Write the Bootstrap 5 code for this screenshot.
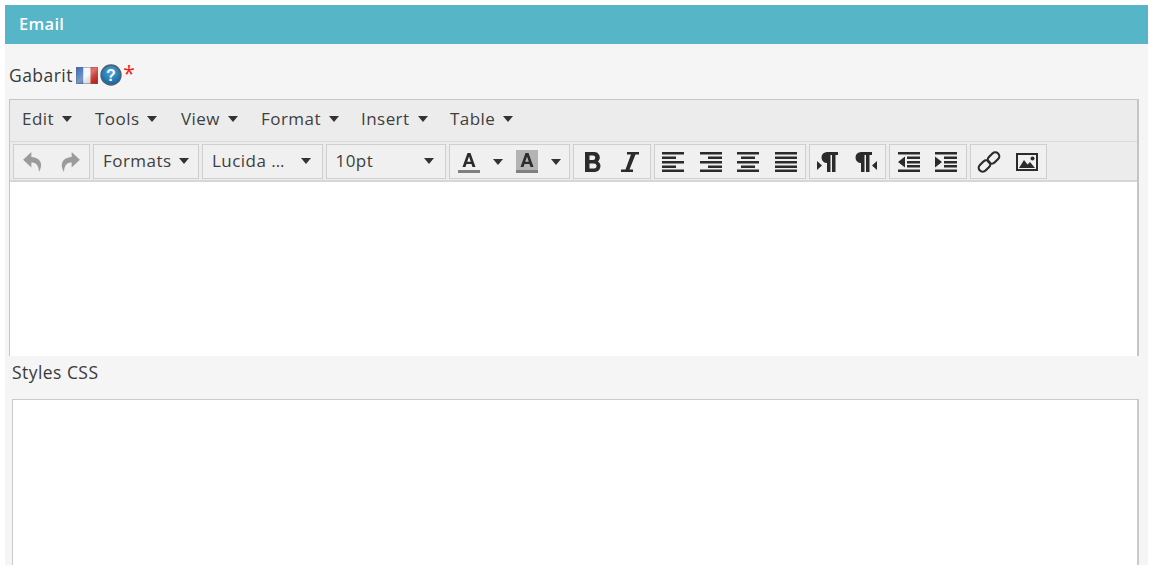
<!DOCTYPE html>
<html lang="fr">
<head>
<meta charset="utf-8">
<title>Email</title>
<link href="https://cdn.jsdelivr.net/npm/bootstrap@5.3.0/dist/css/bootstrap.min.css" rel="stylesheet">
<style>
html,body{height:565px;overflow:hidden}
body{background:#fff;font-family:"Open Sans","Noto Sans",sans-serif;color:#3a3a3a;font-size:17.5px;letter-spacing:.45px;padding:5px 6px 0 5px}
.sheet{background:#f5f5f5;height:560px;overflow:hidden}
.head-bar{background:#56b5c7;color:#fff;height:39px;padding:0 0 1px 14px;font-size:16.500px;font-weight:600;letter-spacing:.3px}
.gab-row{height:55px;padding:7px 0 0 4px;gap:3.500px}
.help-ic{margin-left:-1.500px}
.req{color:#f01c1c;font-size:21px;line-height:1;margin:-4px 0 0 -2.500px}
.editor{margin-left:4px;width:1130px;height:257px;border:1px solid #c5c5c5;border-right-width:2px;border-bottom:0;overflow:hidden;background:#fff}
.menu-row{height:42px;background:#ececec;border-bottom:1px solid #d9d9d9;padding:0 0 3px 12px}
.menu-it{font-size:17px;gap:8px;color:#3e3e3e}
.w-edit{width:73px}.w-tools{width:86px}.w-view{width:80px}.w-format{width:100px}.w-insert{width:89px}
.tool-row{height:40px;background:#ececec;border-bottom:2px solid #d6d6d6;padding:2px 0 0 3px;gap:3px}
.grp{height:35px;background:#f0f0f0;border:1px solid #cfcfcf;flex:none}
.grp svg{flex:none}
.icn{width:37.5px;height:100%}
.sel{padding:0 11px 2px 9px;font-size:17px;color:#3e3e3e}
.g-hist{width:77px}.g-fmt{width:106px;padding-right:9px}.g-font{width:120.500px}.g-size{width:120.500px}.g-color{width:121px;padding:0 8px}
.g-two{width:77.500px}.g-four{width:152px}
.caret-tri{width:0;height:0;border-left:5.500px solid transparent;border-right:5.500px solid transparent;border-top:6px solid #333;display:inline-block;flex:none}
.css-label{height:43px;padding:3px 0 0 7px;font-size:17.500px}
.css-box{margin-left:7px;width:1127px;height:200px;border-radius:0;border:1px solid #cacaca;border-right-width:2px;resize:none;display:block}
</style>
</head>
<body>
<div class="sheet">
  <div class="head-bar d-flex align-items-center">Email</div>
  <div class="gab-row d-flex align-items-center">
    <span>Gabarit</span>
    <svg width="22" height="17" viewBox="0 0 22 17"><defs><linearGradient id="shade" x1="0" y1="0" x2="1" y2="1"><stop offset="0" stop-color="#fff" stop-opacity=".05"/><stop offset=".5" stop-color="#fff" stop-opacity=".35"/><stop offset="1" stop-color="#000" stop-opacity=".1"/></linearGradient></defs><rect width="7.500" height="17" fill="#2d62b4"/><rect x="7.500" width="7" height="17" fill="#f4f4f8"/><rect x="14.500" width="7.500" height="17" fill="#d3241b"/><rect width="22" height="17" fill="url(#shade)"/><rect x=".5" y=".5" width="21" height="16" fill="none" stroke="#667" stroke-opacity=".45"/></svg>
    <svg class="help-ic" width="22" height="22" viewBox="0 0 22 22"><defs><radialGradient id="ball" cx=".5" cy=".35" r=".7"><stop offset="0" stop-color="#4ea6da"/><stop offset="1" stop-color="#0d5f9a"/></radialGradient></defs><circle cx="11" cy="11" r="10" fill="url(#ball)" stroke="#4f5f6b" stroke-width="1.400"/><text x="11" y="16.500" text-anchor="middle" font-family="Liberation Sans,sans-serif" font-weight="700" font-size="16" fill="#fff">?</text></svg>
    <span class="req">*</span>
  </div>
  <div class="editor">
    <div class="menu-row d-flex align-items-center">
      <div class="menu-it w-edit d-flex align-items-center"><span>Edit</span><i class="caret-tri"></i></div>
      <div class="menu-it w-tools d-flex align-items-center"><span>Tools</span><i class="caret-tri"></i></div>
      <div class="menu-it w-view d-flex align-items-center"><span>View</span><i class="caret-tri"></i></div>
      <div class="menu-it w-format d-flex align-items-center"><span>Format</span><i class="caret-tri"></i></div>
      <div class="menu-it w-insert d-flex align-items-center"><span>Insert</span><i class="caret-tri"></i></div>
      <div class="menu-it d-flex align-items-center"><span>Table</span><i class="caret-tri"></i></div>
    </div>
    <div class="tool-row d-flex">
      <div class="grp g-hist d-flex">
        <div class="icn d-flex align-items-center justify-content-center"><svg width="22" height="22" viewBox="0 0 20 20"><path fill="#9b9b9b" d="M8.500 1 1 8l7.500 7v-4.500c4 0 6.500 2 7 8.500 3-5 3.500-12.500-7-13.500z"/></svg></div>
        <div class="icn d-flex align-items-center justify-content-center"><svg width="22" height="22" viewBox="0 0 20 20"><path fill="#9b9b9b" d="M11.500 1 19 8l-7.500 7v-4.500c-4 0-6.500 2-7 8.500-3-5-3.500-12.500 7-13.500z"/></svg></div>
      </div>
      <div class="grp sel g-fmt d-flex align-items-center justify-content-between"><span>Formats</span><i class="caret-tri"></i></div>
      <div class="grp sel g-font d-flex align-items-center justify-content-between"><span>Lucida …</span><i class="caret-tri"></i></div>
      <div class="grp sel g-size d-flex align-items-center justify-content-between"><span>10pt</span><i class="caret-tri"></i></div>
      <div class="grp g-color d-flex align-items-center justify-content-between">
        <svg width="22" height="24" viewBox="0 0 22 24"><path fill="#2b2b2b" d="M4.500 17 9.500 3h3l5 14h-3l-1-3h-5l-1 3zm4.700-5.300h3.600L11 6.500z"/><rect y="20" width="22" height="3" fill="#808080"/></svg>
        <i class="caret-tri"></i>
        <svg width="22" height="24" viewBox="0 0 22 24"><rect width="22" height="23" fill="#b3b3b3"/><path fill="#2b2b2b" d="M4.500 17 9.500 3h3l5 14h-3l-1-3h-5l-1 3zm4.700-5.300h3.600L11 6.500z"/><rect y="20" width="22" height="3" fill="#808080"/></svg>
        <i class="caret-tri"></i>
      </div>
      <div class="grp g-two d-flex">
        <div class="icn d-flex align-items-center justify-content-center"><svg width="20" height="24" viewBox="0 0 20 24"><path fill="#2b2b2b" fill-rule="evenodd" d="M2 2h9a5.500 5.500 0 0 1 4 9.500A5.800 5.800 0 0 1 12 22H2zm4.500 3.500v4.500H10a2.250 2.250 0 0 0 0-4.500zm0 8v5H11a2.500 2.500 0 0 0 0-5z"/></svg></div>
        <div class="icn d-flex align-items-center justify-content-center"><svg width="20" height="24" viewBox="0 0 20 24"><path fill="#2b2b2b" d="M7 2h12v2.500h-3.500L9.500 19.500H13V22H1v-2.500h4.500L11 4.500H7z"/></svg></div>
      </div>
      <div class="grp g-four d-flex">
        <div class="icn d-flex align-items-center justify-content-center"><svg width="22" height="20" viewBox="0 0 22 20"><path fill="#2b2b2b" d="M0 0h22v2.500H0zM0 4.500h14v2.500H0zM0 9h22v2.500H0zM0 13.500h14V16H0zM0 17.500h22V20H0z"/></svg></div>
        <div class="icn d-flex align-items-center justify-content-center"><svg width="22" height="20" viewBox="0 0 22 20"><path fill="#2b2b2b" d="M0 0h22v2.500H0zM8 4.500h14v2.500H8zM0 9h22v2.500H0zM8 13.500h14V16H8zM0 17.500h22V20H0z"/></svg></div>
        <div class="icn d-flex align-items-center justify-content-center"><svg width="22" height="20" viewBox="0 0 22 20"><path fill="#2b2b2b" d="M0 0h22v2.500H0zM4 4.500h14v2.500H4zM0 9h22v2.500H0zM4 13.500h14V16H4zM0 17.500h22V20H0z"/></svg></div>
        <div class="icn d-flex align-items-center justify-content-center"><svg width="22" height="20" viewBox="0 0 22 20"><path fill="#2b2b2b" d="M0 0h22v2.500H0zM0 4.500h22v2.500H0zM0 9h22v2.500H0zM0 13.500h22V16H0zM0 17.500h22V20H0z"/></svg></div>
      </div>
      <div class="grp g-two d-flex">
        <div class="icn d-flex align-items-center justify-content-center"><svg width="22" height="22" viewBox="0 0 22 22"><path fill="#2b2b2b" d="M10 1h11v3h-2.500v17H15V4h-1.500v17H10v-9A5.500 5.500 0 0 1 10 1zM0 10l5 4.500L0 19z"/></svg></div>
        <div class="icn d-flex align-items-center justify-content-center"><svg width="22" height="22" viewBox="0 0 22 22"><path fill="#2b2b2b" d="M6 1h11v3h-2.500v17H11V4H9.500v17H6v-9A5.500 5.500 0 0 1 6 1zM22 10l-5 4.500 5 4.500z"/></svg></div>
      </div>
      <div class="grp g-two d-flex">
        <div class="icn d-flex align-items-center justify-content-center"><svg width="22" height="20" viewBox="0 0 22 20"><path fill="#2b2b2b" d="M0 0h22v2.500H0zM9 4.500h13v2.500H9zM9 9h13v2.500H9zM9 13h13v2.500H9zM0 17.500h22V20H0zM7 4.500v11L0 10z"/></svg></div>
        <div class="icn d-flex align-items-center justify-content-center"><svg width="22" height="20" viewBox="0 0 22 20"><path fill="#2b2b2b" d="M0 0h22v2.500H0zM9 4.500h13v2.500H9zM9 9h13v2.500H9zM9 13h13v2.500H9zM0 17.500h22V20H0zM0 4.500v11L7 10z"/></svg></div>
      </div>
      <div class="grp g-two d-flex">
        <div class="icn d-flex align-items-center justify-content-center"><svg width="24" height="24" viewBox="0 0 24 24" fill="none" stroke="#2b2b2b" stroke-width="2.200"><rect x="12.500" y="1.500" width="8" height="13" rx="4" transform="rotate(45 16.500 8)"/><rect x="3.500" y="9.500" width="8" height="13" rx="4" transform="rotate(45 7.500 16)"/></svg></div>
        <div class="icn d-flex align-items-center justify-content-center"><svg width="22" height="18" viewBox="0 0 22 18"><path fill="#2b2b2b" fill-rule="evenodd" d="M0 0h22v18H0zM2 2v14h18V2z"/><path fill="#2b2b2b" d="M3 15l5-8 3.500 4.500L14 9l5 6z"/><circle cx="16.500" cy="5.500" r="2" fill="#2b2b2b"/></svg></div>
      </div>
    </div>
  </div>
  <div class="css-label">Styles CSS</div>
  <textarea class="form-control css-box" aria-label="Styles CSS"></textarea>
</div>
<script src="https://cdn.jsdelivr.net/npm/bootstrap@5.3.0/dist/js/bootstrap.bundle.min.js"></script>
</body>
</html>
